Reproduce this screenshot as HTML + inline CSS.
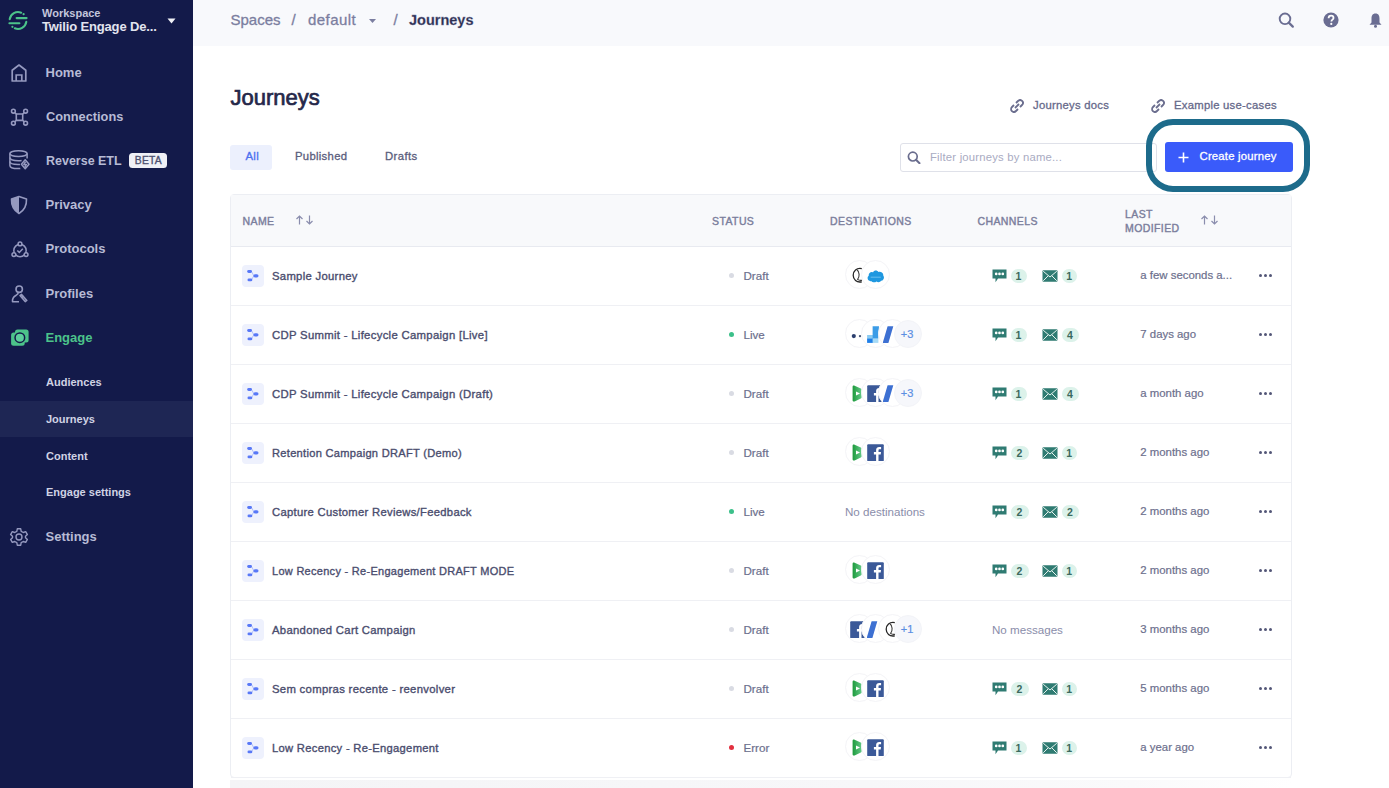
<!DOCTYPE html>
<html><head><meta charset="utf-8"><title>Journeys</title><style>
*{margin:0;padding:0;box-sizing:border-box}
html,body{width:1389px;height:788px;overflow:hidden;background:#fff;font-family:"Liberation Sans",sans-serif}
.abs{position:absolute}
svg{display:block}
.md{-webkit-text-stroke:0.3px currentColor}
.t{position:absolute;white-space:nowrap;line-height:normal}
.reg{font-weight:normal}
#side{position:absolute;left:0;top:0;width:193px;height:788px;background:#131a4a}
.ws1{position:absolute;left:42px;top:7px;font-size:11px;color:#c3c6dc;font-weight:bold;white-space:nowrap}
.ws2{position:absolute;left:42px;top:19px;font-size:13px;letter-spacing:-0.15px;color:#e2e4ef;font-weight:bold;white-space:nowrap}
.nav{position:absolute;left:45.5px;font-size:13px;font-weight:bold;color:#b7bbd5;white-space:nowrap}
.sub{position:absolute;left:46px;font-size:11px;font-weight:bold;color:#d0d3e4;white-space:nowrap}
.sico{position:absolute;left:8px;width:22px;height:22px}
#hdr{position:absolute;left:193px;top:0;width:1196px;height:46px;background:#f8f9fc}
.bc{position:absolute;top:11.2px;font-size:15px;color:#7b7ea0;white-space:nowrap;-webkit-text-stroke:0.3px #7b7ea0}
.row{position:absolute;left:231px;width:1060px;height:59px;border-bottom:1px solid #eff0f4}
.jic{position:absolute;left:242px;width:22px;height:22px;background:#eef1fd;border-radius:4px;padding:4px}
.jic svg{display:block}
.nm{left:271.5px;font-size:11.3px;letter-spacing:0.3px;color:#4a4d6e;-webkit-text-stroke:0.35px #4a4d6e}
.sdot{position:absolute;left:729px;width:5px;height:5px;border-radius:50%}
.st{left:743.5px;font-size:11.6px;color:#6c6f8d;-webkit-text-stroke:0.2px #6c6f8d}
.dc{position:absolute;width:29px;height:29px;border-radius:50%;background:#fff;border:1px solid #f4f4f7}
.di{position:absolute;left:4.5px;top:6px;width:17px;height:17px}
.di svg{width:17px;height:17px}
.di svg{display:block}
.dc.plus{width:28px;height:28px;background:#f6f7fb;border-color:#f3f4f8;color:#5b8ee3;font-size:11px;text-align:center;line-height:26px;padding-right:1px;-webkit-text-stroke:0.2px #5b8ee3}
.chi{position:absolute}
.chi svg{display:block}
.bdg{position:absolute;width:16px;height:14px;border-radius:7px;background:#dcf2ea;color:#3b695e;font-size:10.5px;font-weight:bold;text-align:center;line-height:14px}
.dt{left:1140.3px;font-size:11.4px;color:#6c6f8d;-webkit-text-stroke:0.2px #6c6f8d}
.more{position:absolute;left:1258px;width:15px;height:4px}
.more i{position:absolute;top:0.2px;width:3px;height:3px;border-radius:50%;background:#535677}
.more i:nth-child(1){left:0.5px}.more i:nth-child(2){left:5.7px}.more i:nth-child(3){left:10.9px}
.th{position:absolute;font-size:10.5px;color:#7b7e9c;white-space:nowrap;letter-spacing:0.4px;-webkit-text-stroke:0.4px #7b7e9c}
</style></head><body>
<div id="side"><div class="abs" style="left:7.5px;top:10px"><svg width="20" height="21" viewBox="0 0 20 21"><g fill="none" stroke="#4cc38a" stroke-width="2.1" stroke-linecap="round"><path d="M13.15 2.71 A8.4 8.4 0 0 0 1.7 9.19"/><path d="M6.85 18.29 A8.4 8.4 0 0 0 18.3 11.81"/><path d="M8.6 8.1 H18.6"/><path d="M1.4 13.2 H11.4"/></g><circle cx="15.6" cy="4.2" r="1.1" fill="#4cc38a"/><circle cx="4.4" cy="16.8" r="1.1" fill="#4cc38a"/></svg></div><div class="ws1">Workspace</div><div class="ws2">Twilio Engage De...</div><svg class="abs" style="left:167px;top:18px" width="9" height="6" viewBox="0 0 9 6"><path d="M0.5 0.5 H8.5 L4.5 5.5Z" fill="#f0f1f7"/></svg><div class="nav" style="top:64.8px;transform:scaleX(1);transform-origin:0 0">Home</div><div class="sico" style="top:62px"><svg width="22" height="22" viewBox="0 0 22 22"><path d="M4.2 19 V8.2 L11 3 L17.8 8.2 V19 Z" fill="none" stroke="#9599bf" stroke-width="1.7" stroke-linejoin="round"/><path d="M8.2 19 V13 H13.8 V19" fill="none" stroke="#9599bf" stroke-width="1.7"/></svg></div><div class="nav" style="top:108.6px;transform:scaleX(0.982);transform-origin:0 0">Connections</div><div class="sico" style="top:106px"><svg width="22" height="22" viewBox="0 0 22 22"><g fill="none" stroke="#9599bf" stroke-width="1.6"><rect x="8.3" y="8" width="6.4" height="6.4" rx="0.8"/><circle cx="5.4" cy="5.2" r="1.9"/><circle cx="17.6" cy="5.2" r="1.9"/><circle cx="5.4" cy="17.2" r="1.9"/><circle cx="17.6" cy="17.2" r="1.9"/><path d="M6.7 6.5 L8.6 8.3 M16.3 6.5 L14.4 8.3 M6.7 15.9 L8.6 14.1 M16.3 15.9 L14.4 14.1"/></g></svg></div><div class="nav" style="top:152.8px;transform:scaleX(0.96);transform-origin:0 0">Reverse ETL</div><div class="sico" style="top:148.5px"><svg width="22" height="22" viewBox="0 0 22 22"><g fill="none" stroke="#9599bf" stroke-width="1.5" stroke-linejoin="round"><ellipse cx="10.5" cy="4.6" rx="8.6" ry="2.9"/><path d="M1.9 4.6 V16.4 C1.9 18.4 5.6 19.6 10 19.6 C10.8 19.6 11.6 19.5 12.3 19.4 M19.1 4.6 V9.6"/><path d="M1.9 8.6 C1.9 10.6 5.6 11.8 10.5 11.8 C11.6 11.8 12.6 11.7 13.6 11.5 M1.9 12.6 C1.9 14.6 5.6 15.6 10 15.6 C10.8 15.6 11.4 15.6 12 15.5"/><path d="M17.2 10.8 L13.4 15.2 L17.2 19.8 L21 15.2 Z"/><path d="M17.6 12.6 L15.8 15.4 H18.4 L16.8 18"/></g></svg></div><div class="nav" style="top:197.2px;transform:scaleX(1);transform-origin:0 0">Privacy</div><div class="sico" style="top:194px"><svg width="22" height="22" viewBox="0 0 22 22"><path d="M11 2.5 L18.5 5 C18.8 12 16 16.5 11 19.5 C6 16.5 3.2 12 3.5 5 Z" fill="none" stroke="#9599bf" stroke-width="1.6" stroke-linejoin="round"/><path d="M11 2.5 L3.5 5 C3.2 12 6 16.5 11 19.5 Z" fill="#9599bf"/></svg></div><div class="nav" style="top:241.2px;transform:scaleX(1);transform-origin:0 0">Protocols</div><div class="sico" style="top:238.5px"><svg width="22" height="22" viewBox="0 0 22 22"><g fill="none" stroke="#9599bf" stroke-width="1.5"><circle cx="12" cy="11.5" r="6.2"/><circle cx="12" cy="4.9" r="1.9" fill="#131a4a"/><circle cx="5.9" cy="15.6" r="1.9" fill="#131a4a"/><circle cx="18.1" cy="15.6" r="1.9" fill="#131a4a"/><path d="M9.3 11.5 L11.3 13.4 L14.8 9.8"/></g></svg></div><div class="nav" style="top:286px;transform:scaleX(1);transform-origin:0 0">Profiles</div><div class="sico" style="top:282.5px"><svg width="22" height="22" viewBox="0 0 22 22"><g fill="none" stroke="#9599bf" stroke-width="1.6" stroke-linejoin="round"><circle cx="11.2" cy="6.2" r="3.2"/><path d="M10.2 9.6 C10.5 11 9.5 11.5 7.8 12.5 C5.5 13.8 4.2 15.5 4.5 18.8 H11"/><path d="M12 12.6 L13.6 11.4 L18.8 17.4 L17.2 18.6 Z"/><path d="M13.5 14.6 L15.5 13.2"/></g></svg></div><div class="nav" style="top:330.3px;color:#4cc38a">Engage</div><div class="sico" style="top:326.5px"><svg width="22" height="22" viewBox="0 0 22 22"><rect x="7" y="2.4" width="13.6" height="13.2" rx="2.5" fill="#4cc38a"/><rect x="3.1" y="5.6" width="13.6" height="13.1" rx="2.5" fill="#4cc38a"/><circle cx="11.85" cy="10.7" r="4.8" fill="#5dcf9c" stroke="#131a4a" stroke-width="1.5"/></svg></div><div class="abs" style="left:129.3px;top:153.2px;width:38px;height:15px;background:#eff0f6;border-radius:3.5px;color:#4d5070;font-size:10.3px;text-align:center;line-height:15px;letter-spacing:0.2px;-webkit-text-stroke:0.35px #4d5070">BETA</div><div class="abs" style="left:0;top:400.5px;width:193px;height:36.5px;background:#1e2654"></div><div class="sub" style="top:375.9px">Audiences</div><div class="sub" style="top:412.9px">Journeys</div><div class="sub" style="top:449.6px">Content</div><div class="sub" style="top:486.4px">Engage settings</div><div class="nav" style="top:528.7px">Settings</div><div class="sico" style="top:526px"><svg width="22" height="22" viewBox="0 0 22 22"><g fill="none" stroke="#9599bf" stroke-width="1.4"><path d="M9.3 2.8 H12.7 L13.2 5.3 L15.3 6.5 L17.7 5.7 L19.4 8.6 L17.5 10.3 V11.7 L19.4 13.4 L17.7 16.3 L15.3 15.5 L13.2 16.7 L12.7 19.2 H9.3 L8.8 16.7 L6.7 15.5 L4.3 16.3 L2.6 13.4 L4.5 11.7 V10.3 L2.6 8.6 L4.3 5.7 L6.7 6.5 L8.8 5.3 Z" stroke-linejoin="round"/><circle cx="11" cy="11" r="3"/></g></svg></div></div>
<div id="hdr"></div><div class="bc" style="left:230.5px">Spaces</div><div class="bc" style="left:291.5px">/</div><div class="bc" style="left:308px;letter-spacing:0.45px">default</div><svg class="abs" style="left:369px;top:19px" width="7" height="4" viewBox="0 0 7 4"><path d="M0 0 H7 L3.5 4Z" fill="#7b7ea0"/></svg><div class="bc" style="left:393.5px">/</div><div class="bc" style="left:409px;font-weight:bold;color:#2b2e50;font-size:14.5px;top:11.6px">Journeys</div><svg class="abs" style="left:1278px;top:12px" width="17" height="16" viewBox="0 0 17 16"><circle cx="7" cy="6.8" r="5.3" fill="none" stroke="#6a6d92" stroke-width="1.9"/><path d="M10.8 10.6 L14.8 14.6" stroke="#6a6d92" stroke-width="2.2" stroke-linecap="round"/></svg><svg class="abs" style="left:1322.5px;top:12px" width="16" height="16" viewBox="0 0 16 16"><circle cx="8" cy="8" r="7.6" fill="#6a6d92"/><path d="M5.6 6.2 C5.6 4.6 6.7 3.7 8.1 3.7 C9.5 3.7 10.5 4.6 10.5 5.9 C10.5 7.6 8.4 7.7 8.4 9.4" fill="none" stroke="#fff" stroke-width="1.8"/><circle cx="8.3" cy="11.9" r="1.1" fill="#fff"/></svg><svg class="abs" style="left:1368px;top:12px" width="15" height="16" viewBox="0 0 15 16"><path d="M7.5 1.5 C10.5 1.5 11.5 3.8 11.5 6.5 V10.5 L13.5 12.8 H1.5 L3.5 10.5 V6.5 C3.5 3.8 4.5 1.5 7.5 1.5Z" fill="#6a6d92"/><circle cx="7.5" cy="14.2" r="1.5" fill="#6a6d92"/></svg>
<div class="t" style="left:230.5px;top:85.2px;font-size:22px;color:#25284a;-webkit-text-stroke:0.7px #25284a">Journeys</div><div class="abs" style="left:1010px;top:98.5px"><svg width="14" height="14" viewBox="0 0 14 14"><g fill="none" stroke="#6a6d8e" stroke-width="1.8"><path d="M6 4 L8 2 C9.2 0.8 11 0.8 12.1 1.9 C13.2 3 13.2 4.8 12 6 L10 8"/><path d="M8 10 L6 12 C4.8 13.2 3 13.2 1.9 12.1 C0.8 11 0.8 9.2 2 8 L4 6"/><path d="M5 9 L9 5"/></g></svg></div><div class="t" style="left:1033px;top:98.8px;font-size:11.3px;letter-spacing:0.25px;color:#66698a;-webkit-text-stroke:0.3px #66698a">Journeys docs</div><div class="abs" style="left:1151px;top:98.5px"><svg width="14" height="14" viewBox="0 0 14 14"><g fill="none" stroke="#6a6d8e" stroke-width="1.8"><path d="M6 4 L8 2 C9.2 0.8 11 0.8 12.1 1.9 C13.2 3 13.2 4.8 12 6 L10 8"/><path d="M8 10 L6 12 C4.8 13.2 3 13.2 1.9 12.1 C0.8 11 0.8 9.2 2 8 L4 6"/><path d="M5 9 L9 5"/></g></svg></div><div class="t" style="left:1174px;top:98.8px;font-size:11.3px;letter-spacing:0.25px;color:#66698a;-webkit-text-stroke:0.3px #66698a">Example use-cases</div><div class="abs" style="left:230px;top:145px;width:42px;height:24.5px;background:#ecf0fd;border-radius:3px"></div><div class="t" style="left:245.5px;top:150.2px;font-size:11.3px;letter-spacing:0.3px;color:#4c70f0;-webkit-text-stroke:0.35px #4c70f0">All</div><div class="t" style="left:295px;top:150.2px;font-size:11.3px;letter-spacing:0.3px;color:#5a5d7c;-webkit-text-stroke:0.3px #5a5d7c">Published</div><div class="t" style="left:385px;top:150.2px;font-size:11.3px;letter-spacing:0.4px;color:#5a5d7c;-webkit-text-stroke:0.3px #5a5d7c">Drafts</div><div class="abs" style="left:899.5px;top:142.5px;width:257px;height:29px;border:1px solid #dfe1e9;border-radius:3px;background:#fff"></div><svg class="abs" style="left:906.5px;top:151px" width="14" height="13" viewBox="0 0 14 13"><circle cx="5.8" cy="5.6" r="4.4" fill="none" stroke="#6a6d8e" stroke-width="1.7"/><path d="M9 8.8 L12.5 12.2" stroke="#6a6d8e" stroke-width="2" stroke-linecap="round"/></svg><div class="t" style="left:930px;top:150.8px;font-size:11.3px;letter-spacing:0.2px;color:#a9abc2">Filter journeys by name...</div><div class="abs" style="left:1164.5px;top:142px;width:128px;height:30px;background:#3a5bfa;border-radius:3px"></div><svg class="abs" style="left:1177.5px;top:151.5px" width="11" height="11" viewBox="0 0 11 11"><path d="M5.5 0.5 V10.5 M0.5 5.5 H10.5" stroke="#fff" stroke-width="1.6"/></svg><div class="t" style="left:1199.5px;top:150.1px;font-size:11.3px;letter-spacing:0.22px;color:#fff;-webkit-text-stroke:0.3px #fff">Create journey</div><div class="abs" style="left:1146px;top:119px;width:164px;height:72.5px;border:6px solid #1d6b8b;border-radius:27px"></div>
<div class="abs" style="left:230px;top:193.5px;width:1062px;height:584.5px;border:1px solid #eceef3;border-radius:4px;background:#fff"></div><div class="abs" style="left:231px;top:194.5px;width:1060px;height:52px;background:#f8f9fb;border-bottom:1px solid #e8eaf0"></div><div class="th" style="left:242.5px;top:214.8px">NAME</div><div class="th" style="left:712px;top:214.8px">STATUS</div><div class="th" style="left:830px;top:214.8px">DESTINATIONS</div><div class="th" style="left:977.5px;top:214.8px">CHANNELS</div><div class="th" style="left:1125px;top:207.6px">LAST</div><div class="th" style="left:1125px;top:221.9px">MODIFIED</div><div class="abs" style="left:295px;top:215px"><svg width="20" height="10" viewBox="0 0 20 10"><g fill="none" stroke="#8a8dad" stroke-width="1.2"><path d="M4.5 9.5 V1 M1.5 4 L4.5 1 L7.5 4"/><path d="M14.5 0.5 V9 M11.5 6 L14.5 9 L17.5 6"/></g></svg></div><div class="abs" style="left:1199.5px;top:215px"><svg width="20" height="10" viewBox="0 0 20 10"><g fill="none" stroke="#8a8dad" stroke-width="1.2"><path d="M4.5 9.5 V1 M1.5 4 L4.5 1 L7.5 4"/><path d="M14.5 0.5 V9 M11.5 6 L14.5 9 L17.5 6"/></g></svg></div><div class="row" style="top:247px"></div><div class="jic" style="top:265px"><svg width="14" height="14" viewBox="0 0 14 14"><path d="M5.5 2.5 L7.8 6.8 L5.5 11" fill="none" stroke="#a9b9fa" stroke-width="0.9"/><rect x="1.2" y="1.1" width="4.8" height="2.8" rx="1.4" fill="#5878f7"/><rect x="1.5" y="9.5" width="4.8" height="2.8" rx="1.4" fill="#5878f7"/><rect x="7.4" y="5.2" width="5.1" height="3.2" rx="1.6" fill="#5878f7"/></svg></div><div class="t nm" style="top:270.1px;transform:scaleX(0.999);transform-origin:0 0">Sample Journey</div><div class="sdot" style="top:272.5px;background:#d9dbe3"></div><div class="t st" style="top:269.1px">Draft</div><div class="dc" style="left:844.5px;top:260px;z-index:1"><div class="di"><svg width="17" height="17" viewBox="0 0 17 17"><path d="M11.8 1.6 C6.5 0.6 3.2 4 3.2 8.3 C3.2 12.5 6.5 15.8 11.8 14.8" fill="none" stroke="#262626" stroke-width="1.3"/><path d="M7 2.8 C9.6 4.8 9.8 9.8 7.6 12.4 C9 13.4 10.6 13.6 12 13.2" fill="none" stroke="#3a3a3a" stroke-width="1.1"/></svg></div></div><div class="dc" style="left:861.0px;top:260px;z-index:2"><div class="di"><svg width="17" height="17" viewBox="0 0 17 17"><path d="M3 14 C0.4 13.8 -0.2 10 1.7 9 C1.3 6.2 3.8 4.4 6 5.4 C7 3 10.2 2.8 11.4 5 C13.8 4.2 16.6 5.9 16.3 8.7 C17.6 10 17 13.6 14.2 13.8 C13.1 15.5 10.6 15.5 9.5 14.4 C8 15.7 5.3 15.5 4.6 14.2 C4 14.4 3.4 14.3 3 14Z" fill="#1f98e0"/><path d="M3.6 10.2 H13.8" stroke="#8bd0f4" stroke-width="0.7"/></svg></div></div><div class="chi" style="left:992px;top:269px"><svg width="15" height="14" viewBox="0 0 15 14"><path d="M0.5 0.5 H14.5 V9.5 H6 L3.5 13.2 V9.5 H0.5Z" fill="#2f7b72"/><circle cx="4.2" cy="4.9" r="1.35" fill="#fff"/><circle cx="7.5" cy="4.9" r="1.35" fill="#fff"/><circle cx="10.8" cy="4.9" r="1.35" fill="#fff"/></svg></div><div class="bdg" style="left:1010.5px;top:268.5px;width:16px">1</div><div class="chi" style="left:1042px;top:270px"><svg width="16" height="12" viewBox="0 0 16 12"><rect x="0.5" y="0.3" width="15" height="11.4" rx="1" fill="#2f7b72"/><path d="M1.2 1.2 L8 7 L14.8 1.2 M1.2 10.8 L6.2 5.8 M14.8 10.8 L9.8 5.8" fill="none" stroke="#e8f5f1" stroke-width="1"/></svg></div><div class="bdg" style="left:1061.5px;top:268.5px;width:15.5px">1</div><div class="t dt" style="top:269.1px">a few seconds a...</div><div class="more" style="top:274px"><i></i><i></i><i></i></div><div class="row" style="top:306px"></div><div class="jic" style="top:324px"><svg width="14" height="14" viewBox="0 0 14 14"><path d="M5.5 2.5 L7.8 6.8 L5.5 11" fill="none" stroke="#a9b9fa" stroke-width="0.9"/><rect x="1.2" y="1.1" width="4.8" height="2.8" rx="1.4" fill="#5878f7"/><rect x="1.5" y="9.5" width="4.8" height="2.8" rx="1.4" fill="#5878f7"/><rect x="7.4" y="5.2" width="5.1" height="3.2" rx="1.6" fill="#5878f7"/></svg></div><div class="t nm" style="top:329.1px;transform:scaleX(1.003);transform-origin:0 0">CDP Summit - Lifecycle Campaign [Live]</div><div class="sdot" style="top:331.5px;background:#3cc08a"></div><div class="t st" style="top:328.1px">Live</div><div class="dc" style="left:844.5px;top:319px;z-index:1"><div class="di"><svg width="17" height="17" viewBox="0 0 17 17"><circle cx="3.8" cy="10.1" r="2.1" fill="#2b3f6e"/><circle cx="10" cy="10.1" r="1.2" fill="#4a5878"/></svg></div></div><div class="dc" style="left:861.0px;top:319px;z-index:2"><div class="di"><svg width="17" height="17" viewBox="0 0 17 17"><rect x="0.1" y="9" width="6" height="4" fill="#8ccbf1"/><rect x="0.1" y="12.6" width="6" height="4.3" fill="#1f7fe8"/><path d="M5.6 0.3 H12 L11.2 12.8 H5.6Z" fill="#3b9ce7"/><rect x="5.6" y="12.6" width="5.8" height="4.3" fill="#a6daf6"/></svg></div></div><div class="dc" style="left:877.5px;top:319px;z-index:3"><div class="di"><svg width="17" height="17" viewBox="0 0 17 17"><path d="M4.6 0.2 H10.3 L5.4 17 H-0.3 Z" fill="#3d70d2"/></svg></div></div><div class="dc plus" style="left:893.5px;top:319.5px;z-index:4">+3</div><div class="chi" style="left:992px;top:328px"><svg width="15" height="14" viewBox="0 0 15 14"><path d="M0.5 0.5 H14.5 V9.5 H6 L3.5 13.2 V9.5 H0.5Z" fill="#2f7b72"/><circle cx="4.2" cy="4.9" r="1.35" fill="#fff"/><circle cx="7.5" cy="4.9" r="1.35" fill="#fff"/><circle cx="10.8" cy="4.9" r="1.35" fill="#fff"/></svg></div><div class="bdg" style="left:1010.5px;top:327.5px;width:16px">1</div><div class="chi" style="left:1042px;top:329px"><svg width="16" height="12" viewBox="0 0 16 12"><rect x="0.5" y="0.3" width="15" height="11.4" rx="1" fill="#2f7b72"/><path d="M1.2 1.2 L8 7 L14.8 1.2 M1.2 10.8 L6.2 5.8 M14.8 10.8 L9.8 5.8" fill="none" stroke="#e8f5f1" stroke-width="1"/></svg></div><div class="bdg" style="left:1061.5px;top:327.5px;width:17px">4</div><div class="t dt" style="top:328.1px">7 days ago</div><div class="more" style="top:333px"><i></i><i></i><i></i></div><div class="row" style="top:365px"></div><div class="jic" style="top:383px"><svg width="14" height="14" viewBox="0 0 14 14"><path d="M5.5 2.5 L7.8 6.8 L5.5 11" fill="none" stroke="#a9b9fa" stroke-width="0.9"/><rect x="1.2" y="1.1" width="4.8" height="2.8" rx="1.4" fill="#5878f7"/><rect x="1.5" y="9.5" width="4.8" height="2.8" rx="1.4" fill="#5878f7"/><rect x="7.4" y="5.2" width="5.1" height="3.2" rx="1.6" fill="#5878f7"/></svg></div><div class="t nm" style="top:388.1px;transform:scaleX(1.003);transform-origin:0 0">CDP Summit - Lifecycle Campaign (Draft)</div><div class="sdot" style="top:390.5px;background:#d9dbe3"></div><div class="t st" style="top:387.1px">Draft</div><div class="dc" style="left:844.5px;top:378px;z-index:1"><div class="di"><svg width="17" height="17" viewBox="0 0 17 17"><defs><linearGradient id="gg" x1="0" x2="1" y1="0" y2="0"><stop offset="0" stop-color="#1d9a3c"/><stop offset="1" stop-color="#63c886"/></linearGradient></defs><path d="M2.6 2 C2.6 0.6 3.6 0.3 4.6 0.8 L10.8 3.6 C11.4 3.9 11.6 4.4 11.6 5 V12.2 C11.6 12.8 11.4 13.2 10.8 13.5 L4.6 16.4 C3.6 16.9 2.6 16.5 2.6 15.2 Z" fill="url(#gg)"/><path d="M6 6.6 L10 8.6 L6 10.6 Z" fill="#fff"/></svg></div></div><div class="dc" style="left:861.0px;top:378px;z-index:2"><div class="di"><svg width="17" height="17" viewBox="0 0 17 17"><rect x="0.2" y="0.2" width="16.6" height="17" rx="1" fill="#3b5998"/><path d="M11.5 17.2 V10.6 H13.7 L14 8 H11.5 V6.5 C11.5 5.8 11.7 5.3 12.8 5.3 H14.1 V3 C13.8 2.95 13 2.9 12.2 2.9 C10.4 2.9 9.1 4 9.1 6 V8 H6.9 V10.6 H9.1 V17.2Z" fill="#fff"/></svg></div></div><div class="dc" style="left:877.5px;top:378px;z-index:3"><div class="di"><svg width="17" height="17" viewBox="0 0 17 17"><path d="M4.6 0.2 H10.3 L5.4 17 H-0.3 Z" fill="#3d70d2"/></svg></div></div><div class="dc plus" style="left:893.5px;top:378.5px;z-index:4">+3</div><div class="chi" style="left:992px;top:387px"><svg width="15" height="14" viewBox="0 0 15 14"><path d="M0.5 0.5 H14.5 V9.5 H6 L3.5 13.2 V9.5 H0.5Z" fill="#2f7b72"/><circle cx="4.2" cy="4.9" r="1.35" fill="#fff"/><circle cx="7.5" cy="4.9" r="1.35" fill="#fff"/><circle cx="10.8" cy="4.9" r="1.35" fill="#fff"/></svg></div><div class="bdg" style="left:1010.5px;top:386.5px;width:16px">1</div><div class="chi" style="left:1042px;top:388px"><svg width="16" height="12" viewBox="0 0 16 12"><rect x="0.5" y="0.3" width="15" height="11.4" rx="1" fill="#2f7b72"/><path d="M1.2 1.2 L8 7 L14.8 1.2 M1.2 10.8 L6.2 5.8 M14.8 10.8 L9.8 5.8" fill="none" stroke="#e8f5f1" stroke-width="1"/></svg></div><div class="bdg" style="left:1061.5px;top:386.5px;width:17px">4</div><div class="t dt" style="top:387.1px">a month ago</div><div class="more" style="top:392px"><i></i><i></i><i></i></div><div class="row" style="top:424px"></div><div class="jic" style="top:442px"><svg width="14" height="14" viewBox="0 0 14 14"><path d="M5.5 2.5 L7.8 6.8 L5.5 11" fill="none" stroke="#a9b9fa" stroke-width="0.9"/><rect x="1.2" y="1.1" width="4.8" height="2.8" rx="1.4" fill="#5878f7"/><rect x="1.5" y="9.5" width="4.8" height="2.8" rx="1.4" fill="#5878f7"/><rect x="7.4" y="5.2" width="5.1" height="3.2" rx="1.6" fill="#5878f7"/></svg></div><div class="t nm" style="top:447.1px;transform:scaleX(0.981);transform-origin:0 0">Retention Campaign DRAFT (Demo)</div><div class="sdot" style="top:449.5px;background:#d9dbe3"></div><div class="t st" style="top:446.1px">Draft</div><div class="dc" style="left:844.5px;top:437px;z-index:1"><div class="di"><svg width="17" height="17" viewBox="0 0 17 17"><defs><linearGradient id="gg" x1="0" x2="1" y1="0" y2="0"><stop offset="0" stop-color="#1d9a3c"/><stop offset="1" stop-color="#63c886"/></linearGradient></defs><path d="M2.6 2 C2.6 0.6 3.6 0.3 4.6 0.8 L10.8 3.6 C11.4 3.9 11.6 4.4 11.6 5 V12.2 C11.6 12.8 11.4 13.2 10.8 13.5 L4.6 16.4 C3.6 16.9 2.6 16.5 2.6 15.2 Z" fill="url(#gg)"/><path d="M6 6.6 L10 8.6 L6 10.6 Z" fill="#fff"/></svg></div></div><div class="dc" style="left:861.0px;top:437px;z-index:2"><div class="di"><svg width="17" height="17" viewBox="0 0 17 17"><rect x="0.2" y="0.2" width="16.6" height="17" rx="1" fill="#3b5998"/><path d="M11.5 17.2 V10.6 H13.7 L14 8 H11.5 V6.5 C11.5 5.8 11.7 5.3 12.8 5.3 H14.1 V3 C13.8 2.95 13 2.9 12.2 2.9 C10.4 2.9 9.1 4 9.1 6 V8 H6.9 V10.6 H9.1 V17.2Z" fill="#fff"/></svg></div></div><div class="chi" style="left:992px;top:446px"><svg width="15" height="14" viewBox="0 0 15 14"><path d="M0.5 0.5 H14.5 V9.5 H6 L3.5 13.2 V9.5 H0.5Z" fill="#2f7b72"/><circle cx="4.2" cy="4.9" r="1.35" fill="#fff"/><circle cx="7.5" cy="4.9" r="1.35" fill="#fff"/><circle cx="10.8" cy="4.9" r="1.35" fill="#fff"/></svg></div><div class="bdg" style="left:1010.5px;top:445.5px;width:18px">2</div><div class="chi" style="left:1042px;top:447px"><svg width="16" height="12" viewBox="0 0 16 12"><rect x="0.5" y="0.3" width="15" height="11.4" rx="1" fill="#2f7b72"/><path d="M1.2 1.2 L8 7 L14.8 1.2 M1.2 10.8 L6.2 5.8 M14.8 10.8 L9.8 5.8" fill="none" stroke="#e8f5f1" stroke-width="1"/></svg></div><div class="bdg" style="left:1061.5px;top:445.5px;width:15.5px">1</div><div class="t dt" style="top:446.1px">2 months ago</div><div class="more" style="top:451px"><i></i><i></i><i></i></div><div class="row" style="top:483px"></div><div class="jic" style="top:501px"><svg width="14" height="14" viewBox="0 0 14 14"><path d="M5.5 2.5 L7.8 6.8 L5.5 11" fill="none" stroke="#a9b9fa" stroke-width="0.9"/><rect x="1.2" y="1.1" width="4.8" height="2.8" rx="1.4" fill="#5878f7"/><rect x="1.5" y="9.5" width="4.8" height="2.8" rx="1.4" fill="#5878f7"/><rect x="7.4" y="5.2" width="5.1" height="3.2" rx="1.6" fill="#5878f7"/></svg></div><div class="t nm" style="top:506.1px;transform:scaleX(0.995);transform-origin:0 0">Capture Customer Reviews/Feedback</div><div class="sdot" style="top:508.5px;background:#3cc08a"></div><div class="t st" style="top:505.1px">Live</div><div class="t reg" style="left:845px;top:504.5px;font-size:11.6px;color:#8a8daa">No destinations</div><div class="chi" style="left:992px;top:505px"><svg width="15" height="14" viewBox="0 0 15 14"><path d="M0.5 0.5 H14.5 V9.5 H6 L3.5 13.2 V9.5 H0.5Z" fill="#2f7b72"/><circle cx="4.2" cy="4.9" r="1.35" fill="#fff"/><circle cx="7.5" cy="4.9" r="1.35" fill="#fff"/><circle cx="10.8" cy="4.9" r="1.35" fill="#fff"/></svg></div><div class="bdg" style="left:1010.5px;top:504.5px;width:18px">2</div><div class="chi" style="left:1042px;top:506px"><svg width="16" height="12" viewBox="0 0 16 12"><rect x="0.5" y="0.3" width="15" height="11.4" rx="1" fill="#2f7b72"/><path d="M1.2 1.2 L8 7 L14.8 1.2 M1.2 10.8 L6.2 5.8 M14.8 10.8 L9.8 5.8" fill="none" stroke="#e8f5f1" stroke-width="1"/></svg></div><div class="bdg" style="left:1061.5px;top:504.5px;width:17px">2</div><div class="t dt" style="top:505.1px">2 months ago</div><div class="more" style="top:510px"><i></i><i></i><i></i></div><div class="row" style="top:542px"></div><div class="jic" style="top:560px"><svg width="14" height="14" viewBox="0 0 14 14"><path d="M5.5 2.5 L7.8 6.8 L5.5 11" fill="none" stroke="#a9b9fa" stroke-width="0.9"/><rect x="1.2" y="1.1" width="4.8" height="2.8" rx="1.4" fill="#5878f7"/><rect x="1.5" y="9.5" width="4.8" height="2.8" rx="1.4" fill="#5878f7"/><rect x="7.4" y="5.2" width="5.1" height="3.2" rx="1.6" fill="#5878f7"/></svg></div><div class="t nm" style="top:565.1px;transform:scaleX(0.973);transform-origin:0 0">Low Recency - Re-Engagement DRAFT MODE</div><div class="sdot" style="top:567.5px;background:#d9dbe3"></div><div class="t st" style="top:564.1px">Draft</div><div class="dc" style="left:844.5px;top:555px;z-index:1"><div class="di"><svg width="17" height="17" viewBox="0 0 17 17"><defs><linearGradient id="gg" x1="0" x2="1" y1="0" y2="0"><stop offset="0" stop-color="#1d9a3c"/><stop offset="1" stop-color="#63c886"/></linearGradient></defs><path d="M2.6 2 C2.6 0.6 3.6 0.3 4.6 0.8 L10.8 3.6 C11.4 3.9 11.6 4.4 11.6 5 V12.2 C11.6 12.8 11.4 13.2 10.8 13.5 L4.6 16.4 C3.6 16.9 2.6 16.5 2.6 15.2 Z" fill="url(#gg)"/><path d="M6 6.6 L10 8.6 L6 10.6 Z" fill="#fff"/></svg></div></div><div class="dc" style="left:861.0px;top:555px;z-index:2"><div class="di"><svg width="17" height="17" viewBox="0 0 17 17"><rect x="0.2" y="0.2" width="16.6" height="17" rx="1" fill="#3b5998"/><path d="M11.5 17.2 V10.6 H13.7 L14 8 H11.5 V6.5 C11.5 5.8 11.7 5.3 12.8 5.3 H14.1 V3 C13.8 2.95 13 2.9 12.2 2.9 C10.4 2.9 9.1 4 9.1 6 V8 H6.9 V10.6 H9.1 V17.2Z" fill="#fff"/></svg></div></div><div class="chi" style="left:992px;top:564px"><svg width="15" height="14" viewBox="0 0 15 14"><path d="M0.5 0.5 H14.5 V9.5 H6 L3.5 13.2 V9.5 H0.5Z" fill="#2f7b72"/><circle cx="4.2" cy="4.9" r="1.35" fill="#fff"/><circle cx="7.5" cy="4.9" r="1.35" fill="#fff"/><circle cx="10.8" cy="4.9" r="1.35" fill="#fff"/></svg></div><div class="bdg" style="left:1010.5px;top:563.5px;width:18px">2</div><div class="chi" style="left:1042px;top:565px"><svg width="16" height="12" viewBox="0 0 16 12"><rect x="0.5" y="0.3" width="15" height="11.4" rx="1" fill="#2f7b72"/><path d="M1.2 1.2 L8 7 L14.8 1.2 M1.2 10.8 L6.2 5.8 M14.8 10.8 L9.8 5.8" fill="none" stroke="#e8f5f1" stroke-width="1"/></svg></div><div class="bdg" style="left:1061.5px;top:563.5px;width:15.5px">1</div><div class="t dt" style="top:564.1px">2 months ago</div><div class="more" style="top:569px"><i></i><i></i><i></i></div><div class="row" style="top:601px"></div><div class="jic" style="top:619px"><svg width="14" height="14" viewBox="0 0 14 14"><path d="M5.5 2.5 L7.8 6.8 L5.5 11" fill="none" stroke="#a9b9fa" stroke-width="0.9"/><rect x="1.2" y="1.1" width="4.8" height="2.8" rx="1.4" fill="#5878f7"/><rect x="1.5" y="9.5" width="4.8" height="2.8" rx="1.4" fill="#5878f7"/><rect x="7.4" y="5.2" width="5.1" height="3.2" rx="1.6" fill="#5878f7"/></svg></div><div class="t nm" style="top:624.1px;transform:scaleX(0.999);transform-origin:0 0">Abandoned Cart Campaign</div><div class="sdot" style="top:626.5px;background:#d9dbe3"></div><div class="t st" style="top:623.1px">Draft</div><div class="dc" style="left:844.5px;top:614px;z-index:1"><div class="di"><svg width="17" height="17" viewBox="0 0 17 17"><rect x="0.2" y="0.2" width="16.6" height="17" rx="1" fill="#3b5998"/><path d="M11.5 17.2 V10.6 H13.7 L14 8 H11.5 V6.5 C11.5 5.8 11.7 5.3 12.8 5.3 H14.1 V3 C13.8 2.95 13 2.9 12.2 2.9 C10.4 2.9 9.1 4 9.1 6 V8 H6.9 V10.6 H9.1 V17.2Z" fill="#fff"/></svg></div></div><div class="dc" style="left:861.0px;top:614px;z-index:2"><div class="di"><svg width="17" height="17" viewBox="0 0 17 17"><path d="M4.6 0.2 H10.3 L5.4 17 H-0.3 Z" fill="#3d70d2"/></svg></div></div><div class="dc" style="left:877.5px;top:614px;z-index:3"><div class="di"><svg width="17" height="17" viewBox="0 0 17 17"><path d="M11.8 1.6 C6.5 0.6 3.2 4 3.2 8.3 C3.2 12.5 6.5 15.8 11.8 14.8" fill="none" stroke="#262626" stroke-width="1.3"/><path d="M7 2.8 C9.6 4.8 9.8 9.8 7.6 12.4 C9 13.4 10.6 13.6 12 13.2" fill="none" stroke="#3a3a3a" stroke-width="1.1"/></svg></div></div><div class="dc plus" style="left:893.5px;top:614.5px;z-index:4">+1</div><div class="t reg" style="left:992px;top:623.1px;font-size:11.6px;color:#8a8daa">No messages</div><div class="t dt" style="top:623.1px">3 months ago</div><div class="more" style="top:628px"><i></i><i></i><i></i></div><div class="row" style="top:660px"></div><div class="jic" style="top:678px"><svg width="14" height="14" viewBox="0 0 14 14"><path d="M5.5 2.5 L7.8 6.8 L5.5 11" fill="none" stroke="#a9b9fa" stroke-width="0.9"/><rect x="1.2" y="1.1" width="4.8" height="2.8" rx="1.4" fill="#5878f7"/><rect x="1.5" y="9.5" width="4.8" height="2.8" rx="1.4" fill="#5878f7"/><rect x="7.4" y="5.2" width="5.1" height="3.2" rx="1.6" fill="#5878f7"/></svg></div><div class="t nm" style="top:683.1px;transform:scaleX(1.002);transform-origin:0 0">Sem compras recente - reenvolver</div><div class="sdot" style="top:685.5px;background:#d9dbe3"></div><div class="t st" style="top:682.1px">Draft</div><div class="dc" style="left:844.5px;top:673px;z-index:1"><div class="di"><svg width="17" height="17" viewBox="0 0 17 17"><defs><linearGradient id="gg" x1="0" x2="1" y1="0" y2="0"><stop offset="0" stop-color="#1d9a3c"/><stop offset="1" stop-color="#63c886"/></linearGradient></defs><path d="M2.6 2 C2.6 0.6 3.6 0.3 4.6 0.8 L10.8 3.6 C11.4 3.9 11.6 4.4 11.6 5 V12.2 C11.6 12.8 11.4 13.2 10.8 13.5 L4.6 16.4 C3.6 16.9 2.6 16.5 2.6 15.2 Z" fill="url(#gg)"/><path d="M6 6.6 L10 8.6 L6 10.6 Z" fill="#fff"/></svg></div></div><div class="dc" style="left:861.0px;top:673px;z-index:2"><div class="di"><svg width="17" height="17" viewBox="0 0 17 17"><rect x="0.2" y="0.2" width="16.6" height="17" rx="1" fill="#3b5998"/><path d="M11.5 17.2 V10.6 H13.7 L14 8 H11.5 V6.5 C11.5 5.8 11.7 5.3 12.8 5.3 H14.1 V3 C13.8 2.95 13 2.9 12.2 2.9 C10.4 2.9 9.1 4 9.1 6 V8 H6.9 V10.6 H9.1 V17.2Z" fill="#fff"/></svg></div></div><div class="chi" style="left:992px;top:682px"><svg width="15" height="14" viewBox="0 0 15 14"><path d="M0.5 0.5 H14.5 V9.5 H6 L3.5 13.2 V9.5 H0.5Z" fill="#2f7b72"/><circle cx="4.2" cy="4.9" r="1.35" fill="#fff"/><circle cx="7.5" cy="4.9" r="1.35" fill="#fff"/><circle cx="10.8" cy="4.9" r="1.35" fill="#fff"/></svg></div><div class="bdg" style="left:1010.5px;top:681.5px;width:18px">2</div><div class="chi" style="left:1042px;top:683px"><svg width="16" height="12" viewBox="0 0 16 12"><rect x="0.5" y="0.3" width="15" height="11.4" rx="1" fill="#2f7b72"/><path d="M1.2 1.2 L8 7 L14.8 1.2 M1.2 10.8 L6.2 5.8 M14.8 10.8 L9.8 5.8" fill="none" stroke="#e8f5f1" stroke-width="1"/></svg></div><div class="bdg" style="left:1061.5px;top:681.5px;width:15.5px">1</div><div class="t dt" style="top:682.1px">5 months ago</div><div class="more" style="top:687px"><i></i><i></i><i></i></div><div class="row" style="top:719px"></div><div class="jic" style="top:737px"><svg width="14" height="14" viewBox="0 0 14 14"><path d="M5.5 2.5 L7.8 6.8 L5.5 11" fill="none" stroke="#a9b9fa" stroke-width="0.9"/><rect x="1.2" y="1.1" width="4.8" height="2.8" rx="1.4" fill="#5878f7"/><rect x="1.5" y="9.5" width="4.8" height="2.8" rx="1.4" fill="#5878f7"/><rect x="7.4" y="5.2" width="5.1" height="3.2" rx="1.6" fill="#5878f7"/></svg></div><div class="t nm" style="top:742.1px;transform:scaleX(0.991);transform-origin:0 0">Low Recency - Re-Engagement</div><div class="sdot" style="top:744.5px;background:#e2303f"></div><div class="t st" style="top:741.1px">Error</div><div class="dc" style="left:844.5px;top:732px;z-index:1"><div class="di"><svg width="17" height="17" viewBox="0 0 17 17"><defs><linearGradient id="gg" x1="0" x2="1" y1="0" y2="0"><stop offset="0" stop-color="#1d9a3c"/><stop offset="1" stop-color="#63c886"/></linearGradient></defs><path d="M2.6 2 C2.6 0.6 3.6 0.3 4.6 0.8 L10.8 3.6 C11.4 3.9 11.6 4.4 11.6 5 V12.2 C11.6 12.8 11.4 13.2 10.8 13.5 L4.6 16.4 C3.6 16.9 2.6 16.5 2.6 15.2 Z" fill="url(#gg)"/><path d="M6 6.6 L10 8.6 L6 10.6 Z" fill="#fff"/></svg></div></div><div class="dc" style="left:861.0px;top:732px;z-index:2"><div class="di"><svg width="17" height="17" viewBox="0 0 17 17"><rect x="0.2" y="0.2" width="16.6" height="17" rx="1" fill="#3b5998"/><path d="M11.5 17.2 V10.6 H13.7 L14 8 H11.5 V6.5 C11.5 5.8 11.7 5.3 12.8 5.3 H14.1 V3 C13.8 2.95 13 2.9 12.2 2.9 C10.4 2.9 9.1 4 9.1 6 V8 H6.9 V10.6 H9.1 V17.2Z" fill="#fff"/></svg></div></div><div class="chi" style="left:992px;top:741px"><svg width="15" height="14" viewBox="0 0 15 14"><path d="M0.5 0.5 H14.5 V9.5 H6 L3.5 13.2 V9.5 H0.5Z" fill="#2f7b72"/><circle cx="4.2" cy="4.9" r="1.35" fill="#fff"/><circle cx="7.5" cy="4.9" r="1.35" fill="#fff"/><circle cx="10.8" cy="4.9" r="1.35" fill="#fff"/></svg></div><div class="bdg" style="left:1010.5px;top:740.5px;width:16px">1</div><div class="chi" style="left:1042px;top:742px"><svg width="16" height="12" viewBox="0 0 16 12"><rect x="0.5" y="0.3" width="15" height="11.4" rx="1" fill="#2f7b72"/><path d="M1.2 1.2 L8 7 L14.8 1.2 M1.2 10.8 L6.2 5.8 M14.8 10.8 L9.8 5.8" fill="none" stroke="#e8f5f1" stroke-width="1"/></svg></div><div class="bdg" style="left:1061.5px;top:740.5px;width:15.5px">1</div><div class="t dt" style="top:741.1px">a year ago</div><div class="more" style="top:746px"><i></i><i></i><i></i></div><div class="abs" style="left:230px;top:780px;width:1062px;height:8px;background:linear-gradient(90deg,#f4f4f6,#f7f7f9 60%,#fafafb 85%,#fff)"></div>
</body></html>
